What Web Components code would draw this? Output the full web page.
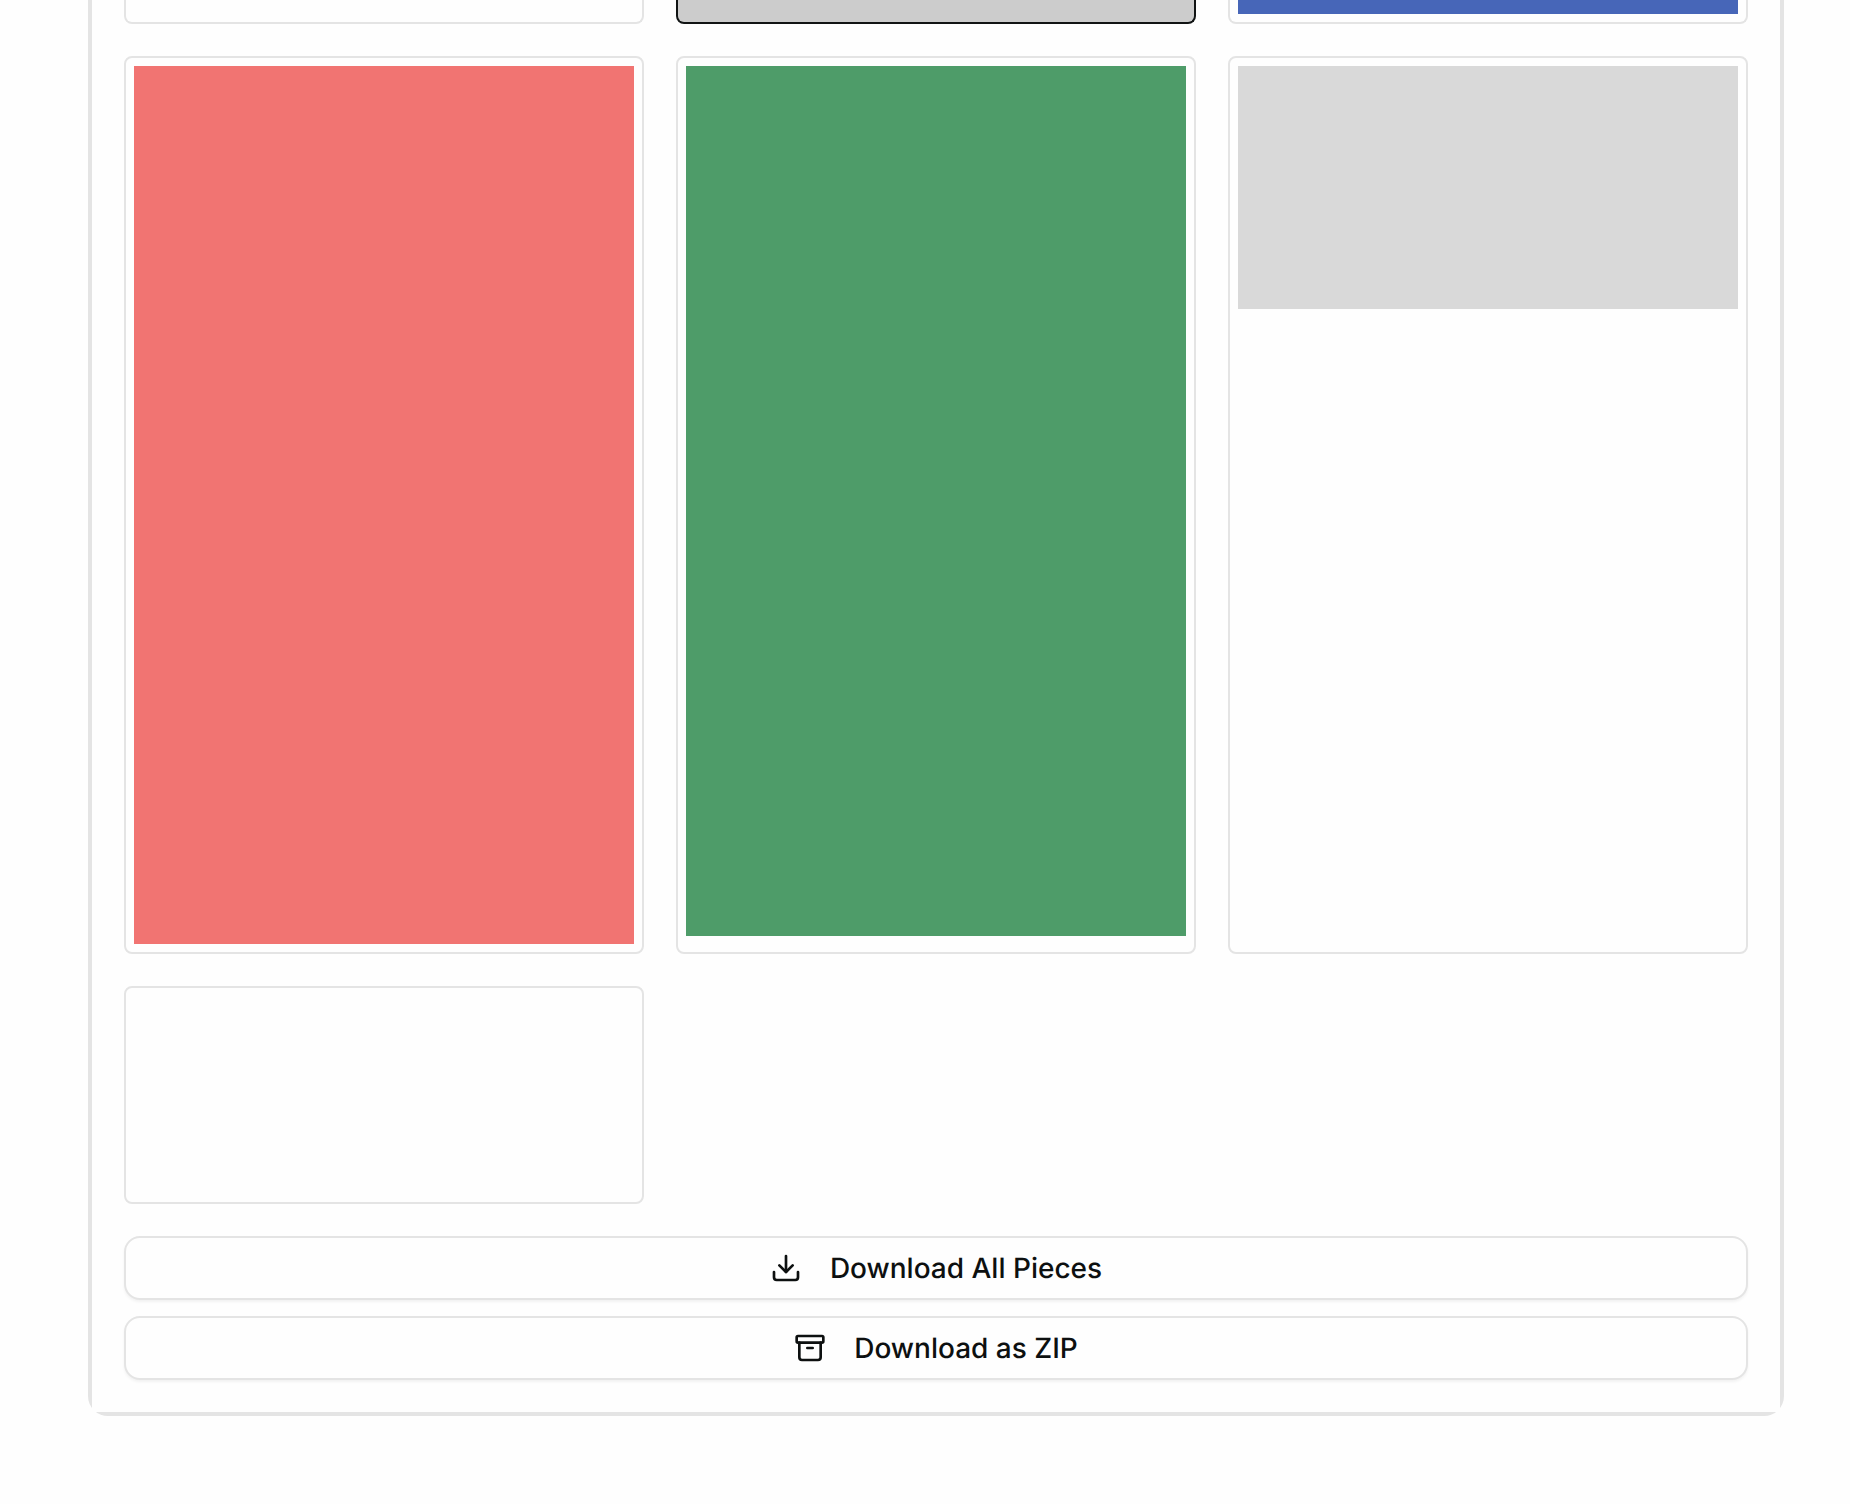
<!DOCTYPE html>
<html lang="en">
<head>
<meta charset="utf-8">
<meta name="viewport" content="width=device-width, initial-scale=1">
<title>Pieces</title>
<style>
  :root { --line: #e4e4e4; --ink: #0d1010; --surface: #fefefe; }
  body { margin: 0; background: var(--surface); color: var(--ink); font-family: Inter, "Liberation Sans", sans-serif; }
</style>
</head>
<body>
<pieces-page></pieces-page>
<script>
const define = (name, html, setup) => {
  const template = document.createElement('template');
  template.innerHTML = html;
  customElements.define(name, class extends HTMLElement {
    constructor() {
      super();
      this.attachShadow({ mode: 'open' }).append(template.content.cloneNode(true));
    }
    connectedCallback() { if (setup) setup(this); }
  });
};

// A piece: colour and ratio describe the image inside the frame
define('piece-card', `
  <style>
    :host { display: block; box-sizing: border-box; border: 2px solid var(--line); border-radius: 8px; padding: 8px; }
    :host([selected]) { border-color: #111414; background: #ccc; }
    :host([continued]) { border-top: 0; padding-top: 0; border-top-left-radius: 0; border-top-right-radius: 0; }
    :host([continued]) .piece { height: 14px; }
    .piece { width: 100%; }
  </style>
  <div class="piece"></div>
`, el => {
  const piece = el.shadowRoot.querySelector('.piece');
  piece.style.background = el.getAttribute('color') || 'transparent';
  if (el.hasAttribute('ratio')) piece.style.aspectRatio = el.getAttribute('ratio');
});

define('piece-grid', `
  <style>
    :host { display: grid; grid-template-columns: repeat(3, minmax(0, 1fr)); gap: 32px; }
  </style>
  <slot></slot>
`);

define('action-button', `
  <style>
    :host { display: block; }
    button { box-sizing: border-box; width: 100%; height: 64px; display: flex; align-items: center; justify-content: center; gap: 28px;
      border: 2px solid var(--line); border-radius: 16px; background: var(--surface); color: inherit;
      font: 500 28px/40px Inter, "Liberation Sans", sans-serif; text-rendering: geometricPrecision; box-shadow: 0 2px 3px rgba(0,0,0,.05); cursor: pointer; }
    ::slotted(svg) { display: block; width: 32px; height: 32px; fill: none; stroke: currentColor; stroke-width: 2; stroke-linecap: round; stroke-linejoin: round; }
  </style>
  <button type="button"><slot name="icon"></slot><span><slot></slot></span></button>
`);

define('piece-panel', `
  <style>
    :host { display: block; border: 4px solid var(--line); border-top: 0; border-radius: 0 0 20px 20px; }
    .content { display: flex; flex-direction: column; gap: 32px; padding: 0 32px 32px; background: var(--surface); }
    .actions { display: flex; flex-direction: column; gap: 16px; }
  </style>
  <div class="content"><slot></slot><div class="actions"><slot name="action"></slot></div></div>
`);

define('pieces-page', `
  <style>
    :host { display: block; }
    main { padding: 0 66px 88px 88px; }
  </style>
  <main>
    <piece-panel>
      <piece-grid>
        <piece-card continued></piece-card>
        <piece-card continued selected></piece-card>
        <piece-card continued color="#4766b8"></piece-card>
        <piece-card color="#f17472" ratio="500 / 878"></piece-card>
        <piece-card color="#4e9c69" ratio="500 / 870"></piece-card>
        <piece-card color="#d9d9d9" ratio="500 / 243"></piece-card>
        <piece-card ratio="500 / 198"></piece-card>
      </piece-grid>
      <action-button slot="action">
        <svg slot="icon" viewBox="0 0 24 24" aria-hidden="true"><path d="M21 15v4a2 2 0 0 1-2 2H5a2 2 0 0 1-2-2v-4"/><path d="m7 10 5 5 5-5"/><path d="M12 15V3"/></svg>Download All Pieces</action-button>
      <action-button slot="action">
        <svg slot="icon" viewBox="0 0 24 24" aria-hidden="true"><rect x="2" y="3" width="20" height="5" rx="1"/><path d="M4 8v11a2 2 0 0 0 2 2h12a2 2 0 0 0 2-2V8"/><path d="M10 12h4"/></svg>Download as ZIP</action-button>
    </piece-panel>
  </main>
`);
</script>
</body>
</html>
